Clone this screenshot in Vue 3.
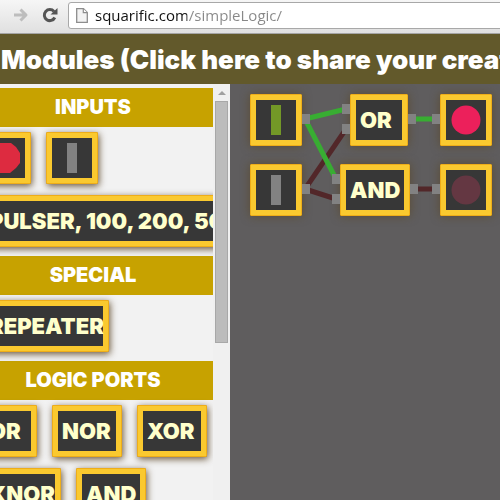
<script setup>
const groups = [
  {
    title: 'INPUTS',
    modules: [
      { id: 'lamp', name: 'Lamp', kind: 'lamp', width: 52 },
      { id: 'switch', name: 'Switch', kind: 'switch', width: 52 },
      { id: 'pulser', label: 'PULSER, 100, 200, 50', width: 280 },
    ],
  },
  { title: 'SPECIAL', modules: [{ id: 'repeater', label: 'REPEATER', width: 130 }] },
  {
    title: 'LOGIC PORTS',
    modules: [
      { id: 'or', label: 'OR', width: 58 },
      { id: 'nor', label: 'NOR', width: 70 },
      { id: 'xor', label: 'XOR', width: 70 },
      { id: 'xnor', label: 'XNOR', width: 82 },
      { id: 'and', label: 'AND', width: 70 },
    ],
  },
]

const nodes = [
  { id: 1, name: 'Switch on', kind: 'switch', fill: '#739827', x: 20, y: 10, width: 52 },
  { id: 2, name: 'Switch off', kind: 'switch', fill: '#828282', x: 20, y: 80, width: 52 },
  { id: 3, label: 'OR', x: 120, y: 10, width: 58 },
  { id: 4, label: 'AND', x: 110, y: 80, width: 70 },
  { id: 5, name: 'Lamp on', kind: 'lamp', fill: '#ec205b', x: 210, y: 10, width: 52 },
  { id: 6, name: 'Lamp off', kind: 'lamp', fill: '#643742', x: 210, y: 80, width: 52 },
]

const wires = [
  { x1: 75, y1: 105, x2: 116, y2: 45, on: false },
  { x1: 75, y1: 105, x2: 106, y2: 115, on: false },
  { x1: 184, y1: 105, x2: 206, y2: 105, on: false },
  { x1: 75, y1: 35, x2: 116, y2: 25, on: true },
  { x1: 75, y1: 35, x2: 106, y2: 95, on: true },
  { x1: 182, y1: 35, x2: 206, y2: 35, on: true },
]

const pins = [
  [70, 30], [70, 100], [112, 20], [112, 40], [102, 90], [102, 110],
  [176, 30], [202, 30], [178, 100], [202, 100],
]
</script>

<template>
  <div class="page">
    <div class="browser">
      <button class="nav" aria-label="Forward">
        <svg width="16" height="16" viewBox="0 0 16 16">
          <path d="M1 8H13M7.500 2.500L13 8L7.500 13.500" fill="none" stroke="#bdbdbd" stroke-width="3" stroke-linejoin="round" />
        </svg>
      </button>
      <button class="nav" aria-label="Reload">
        <svg width="16" height="16" viewBox="0 0 16 16">
          <path d="M12 4.500A5.500 5.500 0 1 0 12.800 10.500" fill="none" stroke="#555" stroke-width="3" />
          <path d="M15.500 1V7.500H8.500Z" fill="#555" />
        </svg>
      </button>
      <label class="address">
        <svg width="12" height="15" viewBox="0 0 12 15">
          <path d="M.700 .700H7.500L11.300 4.500V14.300H.700Z" fill="#f3f3f3" stroke="#8d8d8d" stroke-width="1.300" />
          <path d="M7.300 .700V4.700H11.300" fill="#fff" stroke="#8d8d8d" stroke-width="1.200" />
        </svg>
        <input type="text" value="squarific.com/simpleLogic/" aria-label="Address" />
      </label>
    </div>

    <header class="title">
      <button>Modules (Click here to share your creation)</button>
    </header>

    <main class="workspace">
      <aside class="sidebar">
        <div class="viewport">
          <div class="palette">
            <section v-for="g in groups" :key="g.title">
              <h2>{{ g.title }}</h2>
              <div class="modules">
                <button
                  v-for="m in g.modules"
                  :key="m.id"
                  class="module"
                  :style="{ width: m.width + 'px' }"
                  :aria-label="m.name"
                >
                  <svg v-if="m.kind === 'lamp'" width="40" height="40" viewBox="0 0 40 40">
                    <path d="M15 5H26L31 9L35 15V25L31 30L25 35H15L9 31L5 25V15L9 9Z" fill="#dd2b40" />
                  </svg>
                  <svg v-else-if="m.kind === 'switch'" width="40" height="40" viewBox="0 0 40 40">
                    <rect x="15" y="5" width="10" height="30" fill="#828282" />
                  </svg>
                  <span v-else>{{ m.label }}</span>
                </button>
              </div>
            </section>
          </div>
        </div>
        <div class="scrollbar">
          <svg width="8" height="4" viewBox="0 0 8 4"><path d="M4 0L8 4H0Z" fill="#a0a0a0" /></svg>
          <div class="thumb"></div>
        </div>
      </aside>

      <section class="canvas">
        <button
          v-for="n in nodes"
          :key="n.id"
          class="module node"
          :style="{ left: n.x + 'px', top: n.y + 'px', width: n.width + 'px' }"
          :aria-label="n.name"
        >
          <svg v-if="n.kind" width="40" height="40" viewBox="0 0 40 40">
            <circle v-if="n.kind === 'lamp'" cx="20" cy="20" r="14.500" :fill="n.fill" />
            <rect v-else x="15" y="5" width="10" height="30" :fill="n.fill" />
          </svg>
          <span v-else>{{ n.label }}</span>
        </button>
        <svg class="wires">
          <line
            v-for="(w, i) in wires"
            :key="i"
            :x1="w.x1" :y1="w.y1" :x2="w.x2" :y2="w.y2"
            :stroke="w.on ? '#38ad32' : '#522729'"
            stroke-width="5"
          />
          <rect v-for="(p, i) in pins" :key="i" :x="p[0]" :y="p[1]" width="10" height="10" fill="#828282" />
        </svg>
      </section>
    </main>
  </div>
</template>

<style>
body {
  margin: 0;
  overflow: hidden;
}
</style>

<style scoped>
* {
  box-sizing: border-box;
}
.page {
  display: flex;
  flex-direction: column;
  height: 100vh;
  overflow: hidden;
  font-family: Inter, Roboto, "Liberation Sans", sans-serif;
}
button {
  margin: 0;
  padding: 0;
  border: 0;
  background: none;
  font: inherit;
  color: inherit;
}
svg {
  display: block;
  flex: none;
}
.browser {
  flex: none;
  display: flex;
  align-items: flex-start;
  height: 34px;
  padding: 2px 0 0 13px;
  gap: 13px;
  background: linear-gradient(#f6f6f6, #e0e0e0);
  border-bottom: 1px solid #a5a5a5;
}
.nav {
  padding-top: 5px;
}
.address {
  flex: 1;
  display: flex;
  align-items: center;
  gap: 7px;
  height: 27px;
  margin-right: -4px;
  margin-left: -3px;
  padding-left: 7px;
  background: #fff;
  border: 1px solid #a8a8a8;
  border-radius: 3px;
}
.address input {
  flex: 1;
  min-width: 0;
  height: 25px;
  padding: 0 0 2px;
  border: 0;
  outline: 0;
  font: 15px "Open Sans", "Noto Sans", sans-serif;
  color: transparent;
  background: linear-gradient(90deg, #111 92px, #888 92px);
  background-clip: text;
  -webkit-background-clip: text;
}
.title {
  flex: none;
  display: flex;
  align-items: center;
  height: 50px;
  padding-left: 1px;
  background: #62592b;
  color: #fff;
  font-size: 26px;
  font-weight: 900;
  white-space: nowrap;
}
.workspace {
  flex: 1;
  display: flex;
  min-height: 0;
}
.sidebar {
  flex: none;
  display: flex;
  width: 230px;
  background: #f2f2f2;
}
.viewport {
  flex: 1;
  overflow: hidden;
}
.palette {
  width: 240px;
  margin-left: -27px;
  padding-top: 4px;
}
h2 {
  margin: 0;
  background: #c7a200;
  color: #fff;
  font-size: 20px;
  line-height: 39px;
  font-weight: 900;
  text-align: center;
}
.modules {
  display: flex;
  flex-wrap: wrap;
  gap: 11px 15px;
  padding: 5px 0 9px 6px;
}
.module {
  flex: none;
  display: flex;
  align-items: center;
  height: 52px;
  padding-left: 5px;
  background: #373737;
  border: 1px solid #eead18;
  box-shadow: inset 0 0 0 5px #fac92f, 1px 2px 7px rgba(70, 45, 10, 0.8);
  border-radius: 1px;
  color: #ffffcb;
  font-size: 22px;
  font-weight: 900;
  white-space: nowrap;
}
.module span {
  padding-left: 4px;
}
.scrollbar {
  display: flex;
  flex-direction: column;
  align-items: center;
  width: 17px;
  padding-top: 7px;
  gap: 6px;
  background: #f0f0f0;
}
.thumb {
  width: 13px;
  height: 242px;
  background: #bcbcbc;
  border: 1px solid #a8a8a8;
}
.canvas {
  position: relative;
  flex: 1;
  overflow: hidden;
  background: #5f5d5e;
}
.node {
  position: absolute;
  box-shadow: inset 0 0 0 5px #fac92f, 0 0 10px rgba(90, 65, 20, 0.6);
}
.wires {
  position: absolute;
  inset: 0;
  width: 100%;
  height: 100%;
  pointer-events: none;
  clip-path: path(evenodd, "M0 0H2000V2000H0ZM20 10H72V62H20ZM20 80H72V132H20ZM120 10H178V62H120ZM110 80H180V132H110ZM210 10H262V62H210ZM210 80H262V132H210Z");
}
</style>
